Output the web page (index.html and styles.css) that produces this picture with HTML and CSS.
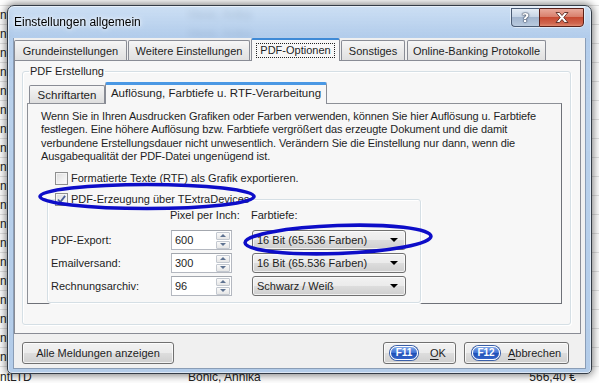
FILE: index.html
```html
<!DOCTYPE html>
<html>
<head>
<meta charset="utf-8">
<link rel="stylesheet" href="styles.css">
</head>
<body>
<div class="desk">
  <div class="drow top"></div>
  <div class="drow"><span class="c1">nt</span><span class="c2">Hexe, Anika</span><span class="c3"></span></div>
  <div class="drow"><span class="c1">nt</span><span class="c2">Hexe, Anika</span><span class="c3"></span></div>
  <div class="drow"><span class="c1">nt</span></div>
  <div class="drow"><span class="c1">nt</span></div>
  <div class="drow"><span class="c1">nt</span></div>
  <div class="drow"><span class="c1">nt</span></div>
  <div class="drow"><span class="c1">nt</span></div>
  <div class="drow"><span class="c1">nt</span></div>
  <div class="drow"><span class="c1">nt</span></div>
  <div class="drow"><span class="c1">nt</span></div>
  <div class="drow"><span class="c1">nt</span></div>
  <div class="drow"><span class="c1">nt</span></div>
  <div class="drow"><span class="c1">nt</span></div>
  <div class="drow"><span class="c1">nt</span></div>
  <div class="drow"><span class="c1">nt</span></div>
  <div class="drow"><span class="c1">nt</span></div>
  <div class="drow"><span class="c1">nt</span></div>
  <div class="drow"><span class="c1">nt</span></div>
  <div class="drow"><span class="c1">nt</span></div>
  <div class="drow last"><span class="c1">ntLTD</span><span class="c2">Bonic, Annika</span><span class="c3">566,40 €</span></div>
</div>

<div class="window">
  <div class="titlebar">
    <span class="title">Einstellungen allgemein</span>
    <div class="capbtns">
      <div class="cbtn help"><span>?</span></div>
      <div class="cbtn close">
        <svg width="14" height="11" viewBox="0 0 14 11"><path d="M1 0.5h3.5l2.5 3 2.5-3h3.5l-4.2 5 4.2 5h-3.5l-2.5-3-2.5 3h-3.5l4.2-5z" fill="#fff" stroke="#5a2a22" stroke-width="0.9" stroke-linejoin="round"/></svg>
      </div>
    </div>
  </div>
  <div class="client">
    <div class="tabs">
      <div class="tab t1">Grundeinstellungen</div>
      <div class="tab t2">Weitere Einstellungen</div>
      <div class="tab active t3"><span class="focus">PDF-Optionen</span></div>
      <div class="tab t4">Sonstiges</div>
      <div class="tab t5">Online-Banking Protokolle</div>
    </div>
    <div class="panel">
      <fieldset class="group g1">
        <legend>PDF Erstellung</legend>
        <div class="subtabs">
          <div class="stab s1">Schriftarten</div>
          <div class="stab sactive">Auflösung, Farbtiefe u. RTF-Verarbeitung</div>
        </div>
        <div class="subpanel">
          <p class="info">Wenn Sie in Ihren Ausdrucken Grafiken oder Farben verwenden, können Sie hier Auflösung u. Farbtiefe<br>festlegen. Eine höhere Auflösung bzw. Farbtiefe vergrößert das erzeugte Dokument und die damit<br>verbundene Erstellungsdauer nicht unwesentlich. Verändern Sie die Einstellung nur dann, wenn die<br>Ausgabequalität der PDF-Datei ungenügend ist.</p>
          <div class="chkrow"><span class="cb"></span><span>Formatierte Texte (RTF) als Grafik exportieren.</span></div>
          <fieldset class="group g2">
            <legend><span class="cb checked"><svg width="11" height="11" viewBox="0 0 11 11"><path d="M2 5.5l2.3 2.6 4.8-6.2" fill="none" stroke="#4a5f97" stroke-width="1.8"/></svg></span><span>PDF-Erzeugung über TExtraDevices</span></legend>
            <div class="hdrrow">
              <span></span><span class="hdr">Pixel per Inch:</span><span class="hdr">Farbtiefe:</span>
            </div>
            <div class="grid">
              <span class="lbl">PDF-Export:</span>
              <div class="spin"><span class="val">600</span><div class="sbtns"><span class="sb up"></span><span class="sb down"></span></div></div>
              <div class="combo"><span>16 Bit (65.536 Farben)</span><span class="arrow"></span></div>
              <span class="lbl">Emailversand:</span>
              <div class="spin"><span class="val">300</span><div class="sbtns"><span class="sb up"></span><span class="sb down"></span></div></div>
              <div class="combo"><span>16 Bit (65.536 Farben)</span><span class="arrow"></span></div>
              <span class="lbl">Rechnungsarchiv:</span>
              <div class="spin"><span class="val">96</span><div class="sbtns"><span class="sb up"></span><span class="sb down"></span></div></div>
              <div class="combo"><span>Schwarz / Weiß</span><span class="arrow"></span></div>
            </div>
          </fieldset>
        </div>
      </fieldset>
    </div>
    <div class="footer">
      <div class="btn wide">Alle Meldungen anzeigen</div>
      <div class="btn ok"><span class="fkey">F11</span><span><u>O</u>K</span></div>
      <div class="btn cancel"><span class="fkey">F12</span><span><u>A</u>bbrechen</span></div>
    </div>
  </div>
</div>

<svg class="marks" width="599" height="383" viewBox="0 0 599 383">
  <ellipse cx="147" cy="196.5" rx="107" ry="12" fill="none" stroke="#0d0dc8" stroke-width="3.6"/>
  <ellipse cx="338" cy="239.5" rx="93" ry="14" fill="none" stroke="#0d0dc8" stroke-width="3.6" transform="rotate(-2 338 239.5)"/>
</svg>
</body>
</html>
```

FILE: styles.css
```css
html, body {
  margin: 0;
  padding: 0;
}
body {
  width: 599px;
  height: 383px;
  overflow: hidden;
  position: relative;
  background: #ffffff;
  font-family: "Liberation Sans", Arial, sans-serif;
  font-size: 11px;
  color: #1e1e1e;
}

/* desktop / background list */
.desk {
  display: flex;
  flex-direction: column;
}
.drow {
  height: 18px;
  flex: none;
  border-bottom: 1px solid #e2e2e2;
  display: flex;
  align-items: center;
  font-size: 12px;
  color: #222;
  white-space: nowrap;
}
.drow.top {
  height: 5px;
}
.drow.last {
  align-items: flex-start;
  padding-top: 3px;
}
.c1 {
  width: 188px;
  flex: none;
}
.c2 {
  width: 340px;
  flex: none;
}
.c3 {
  width: 48px;
  text-align: right;
  flex: none;
}

/* window */
.window {
  position: absolute;
  left: 7px;
  top: 5px;
  width: 585px;
  height: 369px;
  box-sizing: border-box;
  border: 1px solid #343c46;
  border-radius: 7px 7px 5px 5px;
  background: linear-gradient(180deg, rgba(196, 218, 242, 0.86) 0px, rgba(170, 199, 233, 0.9) 30px, rgba(182, 207, 235, 0.95) 100px, rgba(176, 202, 232, 0.96) 100%);
  backdrop-filter: blur(3px);
  box-shadow: 0 0 9px 1px rgba(0, 0, 0, 0.55), inset 0 0 0 1px rgba(255, 255, 255, 0.55);
  padding: 0 5px 4px 5px;
  display: flex;
  flex-direction: column;
}
.titlebar {
  height: 32px;
  flex: none;
  display: flex;
  align-items: flex-start;
}
.title {
  font-size: 12px;
  color: #000;
  margin-top: 10px;
  margin-left: 1px;
  line-height: 13px;
  text-shadow: 0 0 6px rgba(255, 255, 255, 0.9), 0 0 3px rgba(255, 255, 255, 0.9);
}
.capbtns {
  margin-left: auto;
  margin-right: 2px;
  margin-top: 2px;
  display: flex;
  box-shadow: 0 0 0 1px rgba(255, 255, 255, 0.5);
  border-radius: 0 0 5px 5px;
}
.cbtn {
  height: 19px;
  box-sizing: border-box;
  display: flex;
  align-items: center;
  justify-content: center;
}
.help {
  width: 28px;
  border: 1px solid #4b5c74;
  border-right: none;
  border-radius: 0 0 0 4px;
  background: linear-gradient(180deg, #e4ecf5 0%, #c7d5e6 45%, #a3b6cf 50%, #b9cade 100%);
}
.help span {
  font-family: "DejaVu Sans", sans-serif;
  font-weight: bold;
  font-size: 13px;
  color: #fff;
  text-shadow: 0 0 1px #2c3b52, 0 0 1px #2c3b52, 0 0 2px #2c3b52;
  line-height: 13px;
}
.close {
  width: 45px;
  border: 1px solid #5a2019;
  border-radius: 0 0 4px 0;
  background: linear-gradient(180deg, #e9a99b 0%, #d9806d 45%, #c74a32 50%, #d0664f 85%, #e08a70 100%);
}

.client {
  flex: 1;
  background: #f0f0f0;
  border: 1px solid #8a9db6;
  border-top: none;
  padding: 0 4px 0 0;
  display: flex;
  flex-direction: column;
}

/* outer tabs */
.tabs {
  height: 22px;
  flex: none;
  display: flex;
  align-items: flex-end;
  position: relative;
  z-index: 1;
}
.tab {
  box-sizing: border-box;
  height: 20px;
  border: 1px solid #898c95;
  border-bottom: none;
  border-radius: 2px 2px 0 0;
  background: linear-gradient(180deg, #f6f6f6 0%, #eaeaea 50%, #e0e0e0 100%);
  display: flex;
  align-items: center;
  justify-content: center;
  padding-top: 1px;
  white-space: nowrap;
}
.t1 { width: 113px; margin-left: 0; }
.t2 { width: 122px; margin-left: 1px; }
.t3 { width: 89px; margin-left: 1px; }
.t4 { width: 64px; margin-left: 1px; }
.t5 { width: 139px; margin-left: 2px; }
.tab.active {
  height: 23px;
  margin-bottom: -1px;
  background: #f7f7f7;
  border-top: 2px solid #3f8ad6;
  padding-top: 0;
}
.focus {
  outline: 1px dotted #222;
  padding: 0 3px 1px 3px;
  line-height: 12px;
}

.panel {
  flex: none;
  height: 274px;
  box-sizing: border-box;
  border: 1px solid #898c95;
  margin-left: 0;
  background: #f7f7f7;
  display: flex;
  flex-direction: column;
}

/* group boxes */
.group {
  margin: 0;
  border: 1px solid #d5dfe5;
  border-radius: 3px;
  box-shadow: inset 1px 1px 0 #fff, 1px 1px 0 #fff;
  min-width: 0;
}
.group legend {
  line-height: 13px;
  padding: 0 1px;
  white-space: nowrap;
}
.g1 {
  flex: 1;
  margin: 4px 9px 8px 7px;
  padding: 4px 8px 7px 4px;
  display: flex;
  flex-direction: column;
}
.g1 > legend {
  margin-left: 2px;
}

/* sub tabs */
.subtabs {
  height: 21px;
  flex: none;
  display: flex;
  align-items: flex-end;
  position: relative;
  z-index: 1;
}
.stab {
  box-sizing: border-box;
  height: 18px;
  border: 1px solid #898c95;
  border-bottom: none;
  border-radius: 2px 2px 0 0;
  background: linear-gradient(180deg, #f6f6f6 0%, #eaeaea 50%, #dedede 100%);
  display: flex;
  align-items: center;
  justify-content: center;
  white-space: nowrap;
  font-size: 11.5px;
}
.s1 {
  width: 76px;
  margin-left: 2px;
}
.sactive {
  width: 222px;
  height: 22px;
  margin-bottom: -1px;
  background: #f7f7f7;
  border-top: 3px solid #4a98e4;
  padding-bottom: 3px;
}
.subpanel {
  flex: 1;
  border: 1px solid #8d9097;
  border-right-color: #6e7178;
  border-bottom-color: #6e7178;
  background: #f7f7f7;
  padding-top: 6px;
}
.info {
  margin: 0 0 0 13px;
  line-height: 13.3px;
  white-space: nowrap;
  font-size: 11px;
  letter-spacing: -0.1px;
}

/* checkboxes */
.chkrow {
  margin: 9px 0 0 27px;
  display: flex;
  align-items: center;
  gap: 3px;
  line-height: 13px;
}
.cb {
  width: 13px;
  height: 13px;
  box-sizing: border-box;
  border: 1px solid #8e8f8f;
  background: linear-gradient(135deg, #dcdcdc 0%, #f4f4f4 70%, #ffffff 100%);
  box-shadow: inset 0 0 0 1px #f4f4f4;
  display: inline-flex;
  align-items: center;
  justify-content: center;
  flex: none;
}
.cb svg {
  display: block;
}

.g2 {
  width: 374px;
  box-sizing: border-box;
  margin: 8px 0 0 19px;
  padding: 3px 4px 6px 3px;
}
.g2 > legend {
  margin-left: 4px;
  display: flex;
  align-items: center;
  gap: 3px;
  padding: 0 2px 0 0;
}

.hdrrow,
.grid {
  display: grid;
  grid-template-columns: 100px 61px 154px;
  column-gap: 20px;
}
.hdrrow {
  line-height: 13px;
  white-space: nowrap;
}
.hdrrow .hdr {
  margin-left: -1px;
}
.grid {
  margin-top: 8px;
  grid-template-rows: 20px 20px 20px;
  row-gap: 3px;
  align-items: center;
}
.grid .lbl {
  white-space: nowrap;
}

/* spin edit */
.spin {
  height: 20px;
  box-sizing: border-box;
  border: 1px solid #b4b8c0;
  border-top-color: #a3a7ae;
  background: #fff;
  display: flex;
  align-items: center;
  padding-left: 3px;
}
.spin .val {
  flex: 1;
}
.sbtns {
  display: flex;
  flex-direction: column;
  gap: 1px;
  margin-right: 1px;
}
.sb {
  width: 14px;
  height: 8px;
  box-sizing: border-box;
  border: 1px solid #c3c8d0;
  border-radius: 1px;
  background: linear-gradient(180deg, #fafafa, #e6e6e6);
  display: flex;
  align-items: center;
  justify-content: center;
}
.sb::after {
  content: "";
  width: 0;
  height: 0;
  border-left: 3px solid transparent;
  border-right: 3px solid transparent;
}
.sb.up::after {
  border-bottom: 3px solid #5f7391;
}
.sb.down::after {
  border-top: 3px solid #5f7391;
}

/* combo */
.combo {
  height: 20px;
  box-sizing: border-box;
  border: 1px solid #707070;
  border-radius: 3px;
  background: linear-gradient(180deg, #f2f2f2 0%, #ebebeb 50%, #dddddd 51%, #cfcfcf 100%);
  box-shadow: inset 0 0 0 1px rgba(255, 255, 255, 0.7);
  display: flex;
  align-items: center;
  padding: 0 7px 0 4px;
  white-space: nowrap;
}
.combo span:first-child {
  flex: 1;
}
.arrow {
  width: 0;
  height: 0;
  border-left: 4px solid transparent;
  border-right: 4px solid transparent;
  border-top: 4px solid #000;
}

/* footer */
.footer {
  flex: 1;
  display: flex;
  align-items: flex-start;
  padding: 8px 12px 0 8px;
}
.btn {
  height: 22px;
  box-sizing: border-box;
  border: 1px solid #707070;
  border-radius: 3px;
  background: linear-gradient(180deg, #f2f2f2 0%, #ebebeb 50%, #dddddd 51%, #cfcfcf 100%);
  box-shadow: inset 0 0 0 1px rgba(255, 255, 255, 0.75);
  display: flex;
  align-items: center;
  justify-content: center;
  white-space: nowrap;
}
.btn.wide {
  width: 152px;
}
.btn.ok {
  width: 73px;
  margin-left: auto;
  justify-content: flex-start;
  padding-left: 6px;
  gap: 12px;
}
.btn.cancel {
  width: 105px;
  margin-left: 8px;
  justify-content: flex-start;
  padding-left: 7px;
  gap: 8px;
}
.btn u {
  text-decoration-thickness: 1px;
  text-underline-offset: 2px;
}
.fkey {
  width: 28px;
  height: 14px;
  box-sizing: border-box;
  border-radius: 7px;
  border: 1px solid #fff;
  box-shadow: 0 0 0 1px #3a5fa8;
  background: linear-gradient(180deg, #7fa6e8 0%, #3d70d4 50%, #1f4fb5 51%, #3464c8 100%);
  color: #fff;
  font-weight: bold;
  font-size: 10px;
  display: flex;
  align-items: center;
  justify-content: center;
  line-height: 10px;
}

.marks {
  position: absolute;
  left: 0;
  top: 0;
  pointer-events: none;
}
```
